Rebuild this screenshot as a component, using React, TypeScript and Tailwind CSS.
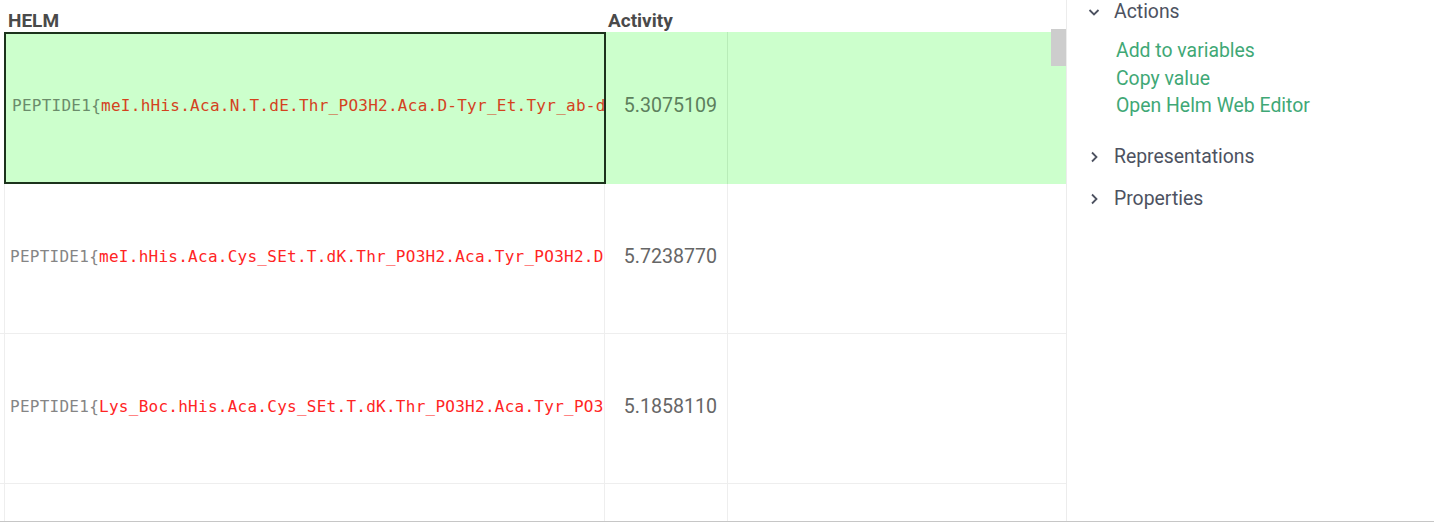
import React from "react";

const mono = { fontFamily: '"DejaVu Sans Mono", "Liberation Mono", monospace' };

function ChevronDown() {
  return (
    <svg width="14" height="14" viewBox="0 0 14 14" className="shrink-0">
      <path d="M2.5 5 L7 9.5 L11.5 5" fill="none" stroke="#4d5261" strokeWidth="1.8" />
    </svg>
  );
}
function ChevronRight() {
  return (
    <svg width="14" height="14" viewBox="0 0 14 14" className="shrink-0">
      <path d="M5 2.5 L9.5 7 L5 11.5" fill="none" stroke="#4d5261" strokeWidth="1.8" />
    </svg>
  );
}

const rows = [
  { rest: "meI.hHis.Aca.Cys_SEt.T.dK.Thr_PO3H2.Aca.Tyr_PO3H2.D-Tyr_Et.Tyr_ab-dehydroMe.dV.E.N.D-Orn.D-aThr.Phe_4Me}$$$$", act: "5.7238770" },
  { rest: "Lys_Boc.hHis.Aca.Cys_SEt.T.dK.Thr_PO3H2.Aca.Tyr_PO3H2.D-Tyr_Et.Tyr_ab-dehydroMe.dV.E.N.D-Orn.D-aThr.Phe_4Me}$$$$", act: "5.1858110" },
];

export default function App() {
  return (
    <div
      className="flex h-[522px] w-[1434px] overflow-hidden border-b border-[#c6c6c6] bg-white"
      style={{ fontFamily: 'Roboto, "Liberation Sans", sans-serif' }}
    >
      {/* grid */}
      <div className="relative flex h-full w-[1067px] shrink-0 flex-col overflow-hidden border-r border-[#ececec]">
        {/* header */}
        <div className="flex h-[32px] shrink-0 items-center pt-[10px] text-[19px] font-bold text-[#4a4a4a]">
          <div className="w-[8px] shrink-0" />
          <div className="w-[600px] shrink-0">HELM</div>
          <div className="w-[122px] shrink-0">Activity</div>
        </div>

        {/* selected row */}
        <div className="flex h-[152px] shrink-0">
          <div className="w-[4px] shrink-0" />
          <div
            className="flex w-[602px] shrink-0 items-center overflow-hidden whitespace-nowrap border-2 border-[#1c331c] bg-[#ccffcc] pb-[4px] pl-[6px] text-[16px] tracking-[0.26px]"
            style={mono}
          >
            <span className="text-[#6b8c6b]">PEPTIDE1{"{"}</span>
            <span className="text-[#d4421e]">meI.hHis.Aca.N.T.dE.Thr_PO3H2.Aca.D-Tyr_Et.Tyr_ab-dehydroMe.dV.E.N.D-Orn.D-aThr.Phe_4Me{"}"}$$$$</span>
          </div>
          <div className="flex w-[122px] shrink-0 items-center justify-end border-r border-[#b8ecb8] bg-[#ccffcc] pb-[4px] pr-[10px] text-[19.6px] text-[#5d7f5d]">
            5.3075109
          </div>
          <div className="flex-1 bg-[#ccffcc]" />
        </div>

        {rows.map((r, i) => (
          <div key={i} className="flex h-[150px] shrink-0 border-b border-[#eeeeee]">
            <div className="w-[5px] shrink-0 border-r border-[#eeeeee]" />
            <div
              className="flex w-[600px] shrink-0 items-center overflow-hidden whitespace-nowrap border-r border-[#eeeeee] pb-[4px] pl-[5px] text-[16px] tracking-[0.26px]"
              style={mono}
            >
              <span className="text-[#858585]">PEPTIDE1{"{"}</span>
              <span className="text-[#ff2424]">{r.rest}</span>
            </div>
            <div className="flex w-[123px] shrink-0 items-center justify-end border-r border-[#eeeeee] pb-[4px] pr-[10px] text-[19.6px] text-[#666666]">
              {r.act}
            </div>
            <div className="flex-1" />
          </div>
        ))}

        <div className="flex flex-1">
          <div className="w-[5px] shrink-0 border-r border-[#eeeeee]" />
          <div className="w-[600px] shrink-0 border-r border-[#eeeeee]" />
          <div className="w-[123px] shrink-0 border-r border-[#eeeeee]" />
          <div className="flex-1" />
        </div>

        {/* scrollbar */}
        <div className="absolute right-0 top-[29px] h-[37px] w-[15px] bg-[#cdcdcd]" />
      </div>

      {/* context panel */}
      <div className="flex flex-1 flex-col pl-[20px] pt-[1px] text-[19.4px] text-[#4d5261]">
        <div className="flex h-[22px] items-center gap-[13px]">
          <ChevronDown />
          <span>Actions</span>
        </div>
        <div className="mt-[14px] flex flex-col pl-[29px] text-[#3fa876]">
          <div className="h-[27.5px] leading-[27.5px]">Add to variables</div>
          <div className="h-[27.5px] leading-[27.5px]">Copy value</div>
          <div className="h-[27.5px] leading-[27.5px]">Open Helm Web Editor</div>
        </div>
        <div className="mt-[26px] flex h-[22px] items-center gap-[13px]">
          <ChevronRight />
          <span>Representations</span>
        </div>
        <div className="mt-[20px] flex h-[22px] items-center gap-[13px]">
          <ChevronRight />
          <span>Properties</span>
        </div>
      </div>
    </div>
  );
}
